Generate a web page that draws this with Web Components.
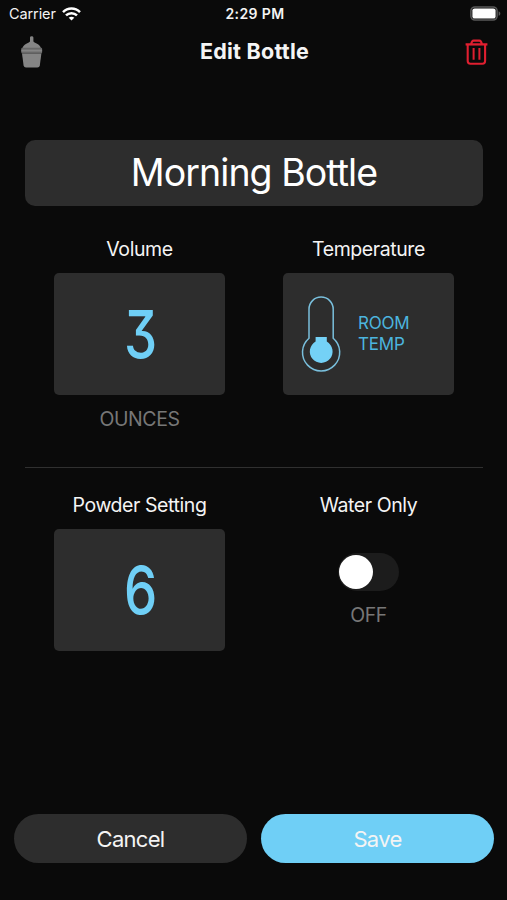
<!DOCTYPE html>
<html lang="en">
<head>
<meta charset="utf-8">
<title>Edit Bottle</title>
<style>
  body {
    margin: 0;
    background: #0a0a0a;
    color: #f4f4f4;
    font-family: Inter, "Liberation Sans", sans-serif;
  }
</style>
</head>
<body>
<bottle-screen>
  <status-bar slot="status" carrier="Carrier" time="2:29 PM"></status-bar>
  <nav-bar slot="nav">Edit Bottle</nav-bar>
  <bottle-name slot="name">Morning Bottle</bottle-name>

  <setting-field slot="top" label="Volume" caption="OUNCES">
    <value-tile><led-digit>3</led-digit></value-tile>
  </setting-field>
  <setting-field slot="top" label="Temperature">
    <value-tile><temp-reading>ROOM<br>TEMP</temp-reading></value-tile>
  </setting-field>

  <setting-field slot="bottom" label="Powder Setting">
    <value-tile><led-digit>6</led-digit></value-tile>
  </setting-field>
  <setting-field slot="bottom" label="Water Only" caption="OFF">
    <toggle-switch></toggle-switch>
  </setting-field>

  <pill-button slot="actions">Cancel</pill-button>
  <pill-button slot="actions" primary>Save</pill-button>
</bottle-screen>

<script>
class BottleScreen extends HTMLElement {
  constructor() {
    super()
    this.attachShadow({ mode: 'open' })
    this.shadowRoot.innerHTML = /* html */ `
      <style>
        :host {
          display: flex;
          flex-direction: column;
          box-sizing: border-box;
          height: 900px;
          padding-bottom: 37px;
          overflow: hidden;
        }
        .content {
          flex: 1;
          padding: 63px 24px 0 25px;
        }
        .row {
          display: grid;
          grid-template-columns: 1fr 1fr;
        }
        .top {
          height: 230px;
          margin-top: 31px;
        }
        .bottom {
          padding-top: 25px;
        }
        hr {
          margin: 0;
          border: 0;
          height: 1px;
          background: #303030;
        }
        .actions {
          display: grid;
          grid-template-columns: 1fr 1fr;
          gap: 14px;
          padding: 0 13px 0 14px;
        }
      </style>
      <slot name="status"></slot>
      <slot name="nav"></slot>
      <main class="content">
        <slot name="name"></slot>
        <div class="row top"><slot name="top"></slot></div>
        <hr>
        <div class="row bottom"><slot name="bottom"></slot></div>
      </main>
      <footer class="actions"><slot name="actions"></slot></footer>
    `;
  }
}

class StatusBar extends HTMLElement {
  constructor() {
    super()
    this.attachShadow({ mode: 'open' })
    this.shadowRoot.innerHTML = /* html */ `
      <style>
        :host {
          display: grid;
          grid-template-columns: 1fr auto 1fr;
          align-items: center;
          height: 27px;
          padding: 0 6px 0 9px;
          font-size: 14.5px;
        }
        .carrier {
          display: flex;
          align-items: center;
          gap: 6px;
          letter-spacing: -0.1px;
        }
        .time {
          font-size: 14px;
          font-weight: 600;
          letter-spacing: 0.4px;
        }
        .battery {
          justify-self: end;
        }
        svg {
          display: block;
        }
      </style>
      <div class="carrier">
        <span>${this.getAttribute('carrier')}</span>
        <svg width="19" height="14" viewBox="0 0 19 14" fill="none" stroke="#fff" stroke-width="2.5">
          <path d="M1 5.2C5.8 .4 13.2 .4 18 5.2"/>
          <path d="M4 8.4C7 5.4 12 5.4 15 8.4"/>
          <path d="M9.5 13.6 6.7 10.8C8.3 9.4 10.7 9.4 12.3 10.8Z" fill="#fff" stroke="none"/>
        </svg>
      </div>
      <span class="time">${this.getAttribute('time')}</span>
      <svg class="battery" width="31" height="15" viewBox="0 0 31 15">
        <rect x=".9" y=".9" width="26.2" height="13.2" rx="4" fill="none" stroke="#5a5a5a" stroke-width="1.5"/>
        <rect x="2.4" y="2.4" width="23.2" height="10.2" rx="2.2" fill="#fff"/>
        <path d="M28.6 5.2C30.9 6 30.9 9 28.6 9.8Z" fill="#5a5a5a"/>
      </svg>
    `;
  }
}

class NavBar extends HTMLElement {
  constructor() {
    super()
    this.attachShadow({ mode: 'open' })
    this.shadowRoot.innerHTML = /* html */ `
      <style>
        :host {
          display: grid;
          grid-template-columns: 1fr auto 1fr;
          align-items: center;
          height: 50px;
          padding: 0 18px 0 20px;
        }
        h1 {
          margin: 0;
          font-size: 21.5px;
          font-weight: 650;
          letter-spacing: 0.25px;
          line-height: 48px;
          padding-bottom: 2px;
        }
        svg {
          display: block;
        }
        .delete {
          justify-self: end;
        }
      </style>
      <svg width="24" height="34" viewBox="0 0 24 34" fill="#858585">
        <path d="M10 2.5Q10 1.3 11.7 1.3T13.4 2.5V6.4Q14.2 7.4 16.6 8.4C19.3 9.5 20.6 11.4 21 13.4H2.4C2.8 11.4 4.1 9.5 6.8 8.4Q9.2 7.4 10 6.4Z"/>
        <rect x="1.3" y="12.8" width="20.8" height="5.6" rx="1" fill="#686868"/>
        <rect x="1.3" y="14.6" width="20.8" height="2"/>
        <path d="M2 18.4H21.4L19.8 30.5Q19.5 32.6 17.4 32.6H6Q3.9 32.6 3.6 30.5Z"/>
      </svg>
      <h1><slot></slot></h1>
      <svg class="delete" width="24" height="28" viewBox="0 0 24 28" fill="none" stroke="#e01f30" stroke-width="2.1">
        <path d="M.6 6.4H22.4" stroke-width="2.3"/>
        <path d="M6.2 6.2Q6.7 2.6 8.6 2.6H14.4Q16.3 2.6 16.8 6.2"/>
        <path d="M2.7 6.2V23.1Q2.7 25.7 5.4 25.7H17.4Q20.1 25.7 20.1 23.1V6.2"/>
        <path d="M8.6 10V21.7M14.4 10V21.7" stroke-width="2"/>
      </svg>
    `;
  }
}

class BottleName extends HTMLElement {
  constructor() {
    super()
    this.attachShadow({ mode: 'open' })
    this.shadowRoot.innerHTML = /* html */ `
      <style>
        :host {
          display: block;
          height: 66px;
          border-radius: 10px;
          background: #2d2d2d;
          color: #fff;
          font-size: 37.5px;
          letter-spacing: -0.95px;
          line-height: 65px;
          text-align: center;
        }
      </style>
      <slot></slot>
    `;
  }
}

class SettingField extends HTMLElement {
  constructor() {
    super()
    this.attachShadow({ mode: 'open' })
    const caption = this.getAttribute('caption')
    this.shadowRoot.innerHTML = /* html */ `
      <style>
        :host {
          display: flex;
          flex-direction: column;
          align-items: center;
          font-size: 19.5px;
          letter-spacing: -0.42px;
          line-height: 24px;
        }
        .control {
          display: flex;
          margin-top: 12px;
        }
        .caption {
          margin-top: 12px;
          color: #777;
        }
      </style>
      <div class="label">${this.getAttribute('label')}</div>
      <div class="control"><slot></slot></div>
      ${caption ? `<div class="caption">${caption}</div>` : ''}
    `;
  }
}

class ValueTile extends HTMLElement {
  constructor() {
    super()
    this.attachShadow({ mode: 'open' })
    this.shadowRoot.innerHTML = /* html */ `
      <style>
        :host {
          display: flex;
          align-items: center;
          justify-content: center;
          width: 171px;
          height: 122px;
          border-radius: 5px;
          background: #2d2d2d;
          color: #6fcff6;
          letter-spacing: 0;
        }
      </style>
      <slot></slot>
    `;
  }
}

class LedDigit extends HTMLElement {
  constructor() {
    super()
    this.attachShadow({ mode: 'open' })
    this.shadowRoot.innerHTML = /* html */ `
      <style>
        :host {
          display: block;
          padding-left: 2px;
          font-size: 66px;
          font-weight: 450;
          font-feature-settings: "cv09";
          line-height: 120px;
          transform: scaleX(0.8);
        }
      </style>
      <slot></slot>
    `;
  }
}

class TempReading extends HTMLElement {
  constructor() {
    super()
    this.attachShadow({ mode: 'open' })
    this.shadowRoot.innerHTML = /* html */ `
      <style>
        :host {
          display: flex;
          align-items: center;
          gap: 17px;
          width: 135px;
          color: #4cb5df;
          font-size: 17px;
          letter-spacing: -0.2px;
          line-height: 21px;
        }
        svg {
          display: block;
        }
      </style>
      <svg width="40" height="76" viewBox="0 0 40 76">
        <path d="M8 42.2V13.2A12.1 12.1 0 0 1 32.2 13.2V42.2A18.6 18.6 0 1 1 8 42.2Z" fill="none" stroke="#79bfdc" stroke-width="1.5"/>
        <path d="M14.6 41H25.8V45.6A11.4 11.4 0 1 1 14.6 45.6Z" fill="#74d1f6"/>
      </svg>
      <div><slot></slot></div>
    `;
  }
}

class ToggleSwitch extends HTMLElement {
  constructor() {
    super()
    this.attachShadow({ mode: 'open' })
    this.shadowRoot.innerHTML = /* html */ `
      <style>
        :host {
          display: flex;
          box-sizing: border-box;
          width: 61px;
          height: 38px;
          margin-top: 24px;
          padding: 2px 1px;
          border-radius: 19px;
          background: #1c1c1c;
        }
        .knob {
          width: 34px;
          height: 34px;
          border-radius: 50%;
          background: #fff;
        }
      </style>
      <div class="knob"></div>
    `;
  }
}

class PillButton extends HTMLElement {
  constructor() {
    super()
    this.attachShadow({ mode: 'open' })
    this.shadowRoot.innerHTML = /* html */ `
      <style>
        :host {
          display: block;
        }
        button {
          display: block;
          width: 100%;
          height: 49px;
          padding: 0;
          border: 0;
          border-radius: 25px;
          background: #2d2d2d;
          color: inherit;
          font: inherit;
          font-size: 22px;
          letter-spacing: -0.7px;
        }
        :host([primary]) button {
          background: #6fcff6;
        }
      </style>
      <button type="button"><slot></slot></button>
    `;
  }
}

customElements.define('bottle-screen', BottleScreen);
customElements.define('status-bar', StatusBar);
customElements.define('nav-bar', NavBar);
customElements.define('bottle-name', BottleName);
customElements.define('setting-field', SettingField);
customElements.define('value-tile', ValueTile);
customElements.define('led-digit', LedDigit);
customElements.define('temp-reading', TempReading);
customElements.define('toggle-switch', ToggleSwitch);
customElements.define('pill-button', PillButton);
</script>
</body>
</html>
